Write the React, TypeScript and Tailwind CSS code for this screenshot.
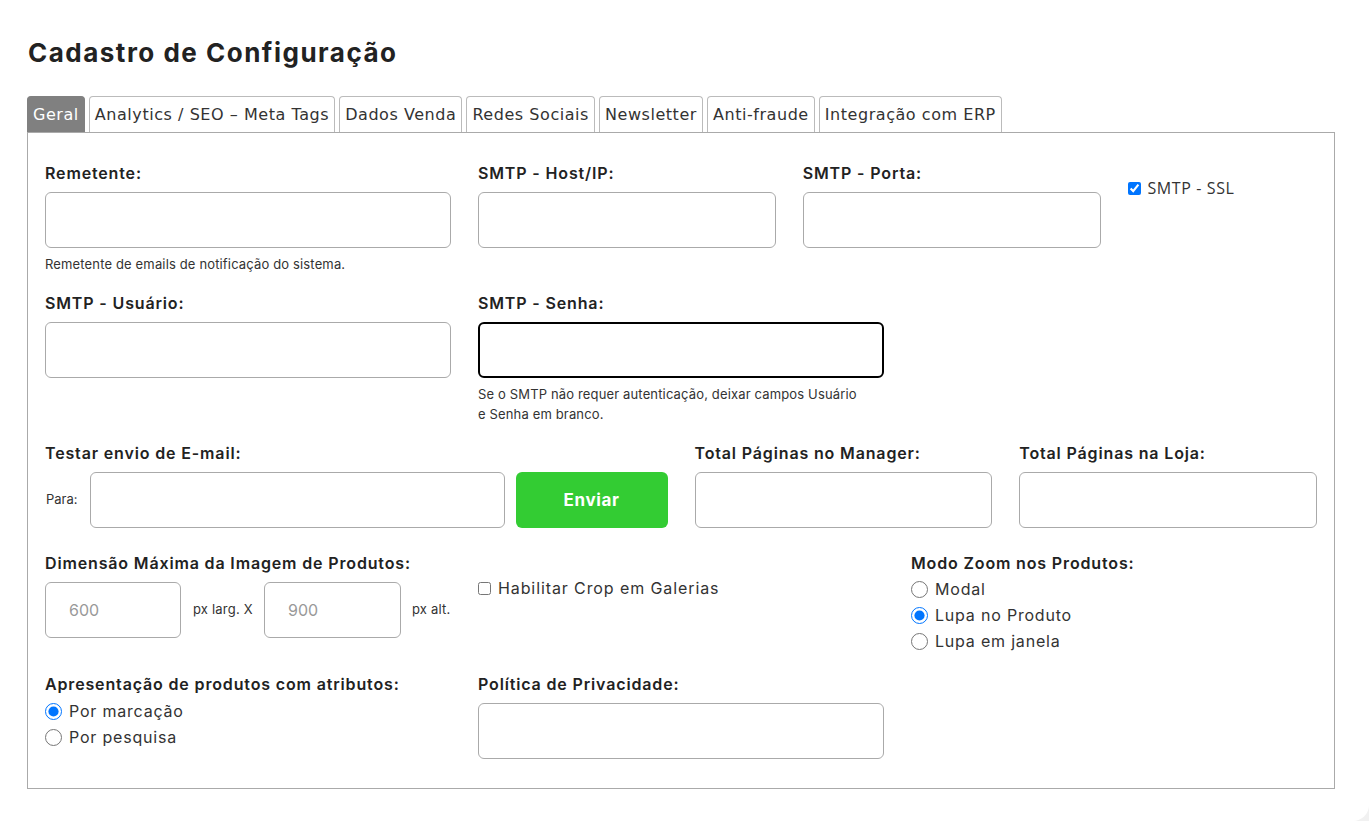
import React from "react";

const poppins = { fontFamily: "Inter, 'Noto Sans', sans-serif" };

const tabs = [
  "Geral",
  "Analytics / SEO – Meta Tags",
  "Dados Venda",
  "Redes Sociais",
  "Newsletter",
  "Anti-fraude",
  "Integração com ERP",
];

function Label({ children, tight }: { children: React.ReactNode; tight?: boolean }) {
  return (
    <div
      className={`text-[16px] leading-[24px] font-semibold tracking-[0.85px] text-[#222] ${
        tight ? "mb-px" : "mb-[7px]"
      }`}
    >
      {children}
    </div>
  );
}

function Input({ className = "", placeholder }: { className?: string; placeholder?: string }) {
  return (
    <input
      placeholder={placeholder}
      className={`block h-[56px] w-full rounded-[6px] border border-[#aaa] bg-white px-[23px] text-[16px] text-[#333] placeholder:text-[#999] outline-none ${className}`}
    />
  );
}

function Help({ children }: { children: React.ReactNode }) {
  return (
    <p className="mt-[6px] text-[13px] leading-[20px] tracking-[0.15px] text-[#333]">{children}</p>
  );
}

function Radio({ name, label, checked }: { name: string; label: string; checked?: boolean }) {
  return (
    <label className="flex h-[26px] items-center gap-[7px] text-[16px] tracking-[0.8px] text-[#333]">
      <input type="radio" name={name} defaultChecked={checked} className="m-0 h-[17px] w-[17px]" />
      {label}
    </label>
  );
}

export default function App() {
  return (
    <div className="min-h-screen bg-[#f1f1f1]" style={poppins}>
      <div className="min-h-[821px] rounded-br-2xl bg-white pl-[27px] pr-[34px] pt-[36px]">
        <h1 className="pl-px text-[26px] font-bold leading-[34px] tracking-[1.5px] text-[#222]">
          Cadastro de Configuração
        </h1>

        <div
          className="mt-[26px] flex gap-[4px]"
          style={{ fontFamily: "'DejaVu Sans', Verdana, sans-serif" }}
        >
          {tabs.map((t, i) => (
            <div
              key={t}
              className={`h-[36px] rounded-t-[4px] border border-b-0 px-[5px] pt-[7px] text-[16px] leading-[22px] tracking-[0.55px] ${
                i === 0 ? "border-[#808080] bg-[#808080] text-white" : "border-[#bbb] bg-white text-[#333]"
              }`}
            >
              {t}
            </div>
          ))}
        </div>

        <div className="border border-[#aaa] px-[17px] pt-[28px] pb-[29px]">
          {/* row 1 */}
          <div className="grid grid-cols-12 gap-x-[27px]">
            <div className="col-span-4">
              <Label>Remetente:</Label>
              <Input />
              <Help>Remetente de emails de notificação do sistema.</Help>
            </div>
            <div className="col-span-3">
              <Label>SMTP - Host/IP:</Label>
              <Input />
            </div>
            <div className="col-span-3">
              <Label>SMTP - Porta:</Label>
              <Input />
            </div>
            <div className="col-span-2 pt-[15px]">
              <label
                className="flex items-center gap-[7px] text-[16px] tracking-[0.6px] text-[#333]"
                style={{ fontFamily: "'Open Sans', sans-serif" }}
              >
                <input type="checkbox" defaultChecked className="m-0 h-[13px] w-[13px]" />
                SMTP - SSL
              </label>
            </div>
          </div>

          {/* row 2 */}
          <div className="mt-[17px] grid grid-cols-12 gap-x-[27px]">
            <div className="col-span-4">
              <Label>SMTP - Usuário:</Label>
              <Input />
            </div>
            <div className="col-span-4">
              <Label>SMTP - Senha:</Label>
              <Input className="border-2 border-black" />
              <Help>
                Se o SMTP não requer autenticação, deixar campos Usuário
                <br />e Senha em branco.
              </Help>
            </div>
          </div>

          {/* row 3 */}
          <div className="mt-[17px] grid grid-cols-12 gap-x-[27px]">
            <div className="col-span-6">
              <Label>Testar envio de E-mail:</Label>
              <div className="flex items-center">
                <span className="w-[45px] shrink-0 pl-px text-[13px] text-[#333]">Para:</span>
                <Input className="flex-1" />
                <button className="ml-[11px] h-[56px] w-[152px] shrink-0 rounded-[6px] bg-[#33cc33] pt-px text-[17px] font-bold tracking-[0.6px] text-white">
                  Enviar
                </button>
              </div>
            </div>
            <div className="col-span-3">
              <Label>Total Páginas no Manager:</Label>
              <Input />
            </div>
            <div className="col-span-3">
              <Label>Total Páginas na Loja:</Label>
              <Input />
            </div>
          </div>

          {/* row 4 */}
          <div className="mt-[23px] grid grid-cols-12 gap-x-[27px]">
            <div className="col-span-4">
              <Label>Dimensão Máxima da Imagem de Produtos:</Label>
              <div className="flex items-center">
                <Input className="!w-[136px] shrink-0" placeholder="600" />
                <span className="ml-[12px] w-[71px] shrink-0 text-[13px] tracking-[0.2px] text-[#333]">
                  px larg. X
                </span>
                <Input className="!w-[137px] shrink-0" placeholder="900" />
                <span className="ml-[11px] text-[13px] tracking-[0.2px] text-[#333]">px alt.</span>
              </div>
            </div>
            <div className="col-span-4 pt-[25px]">
              <label className="flex items-center gap-[7px] text-[16px] tracking-[0.9px] text-[#333]">
                <input type="checkbox" className="m-0 h-[13px] w-[13px]" />
                Habilitar Crop em Galerias
              </label>
            </div>
            <div className="col-span-4">
              <Label tight>Modo Zoom nos Produtos:</Label>
              <Radio name="zoom" label="Modal" />
              <Radio name="zoom" label="Lupa no Produto" checked />
              <Radio name="zoom" label="Lupa em janela" />
            </div>
          </div>

          {/* row 5 */}
          <div className="mt-[18px] grid grid-cols-12 gap-x-[27px]">
            <div className="col-span-4">
              <Label tight>Apresentação de produtos com atributos:</Label>
              <div className="pt-px">
                <Radio name="attr" label="Por marcação" checked />
                <Radio name="attr" label="Por pesquisa" />
              </div>
            </div>
            <div className="col-span-4">
              <Label>Política de Privacidade:</Label>
              <Input />
            </div>
          </div>
        </div>
      </div>
    </div>
  );
}
